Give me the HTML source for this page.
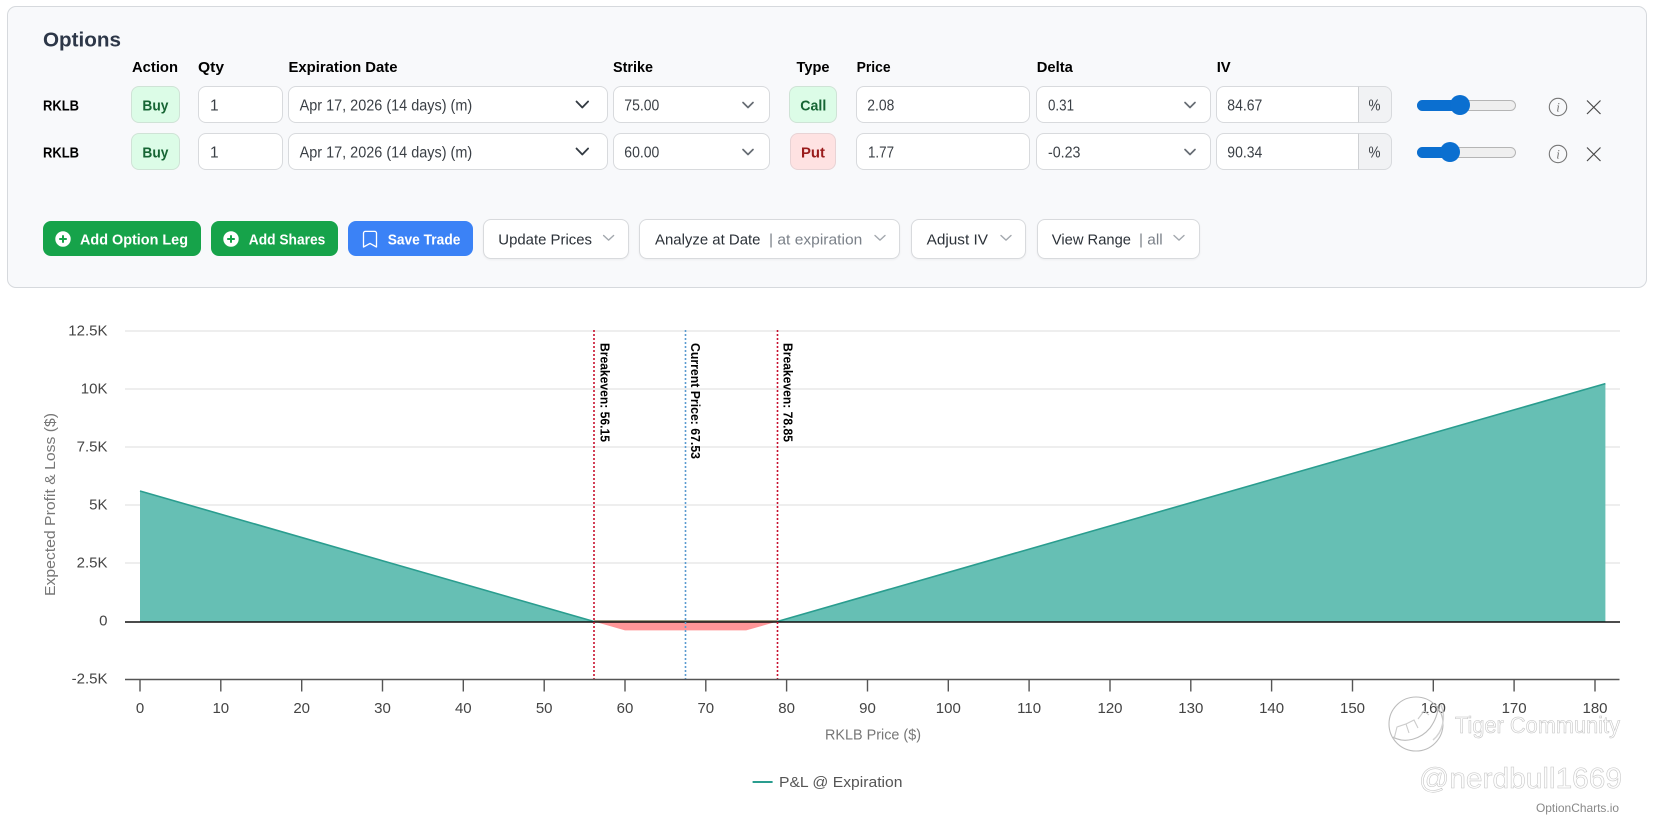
<!DOCTYPE html>
<html lang="en">
<head>
<meta charset="utf-8">
<title>Options</title>
<style>
html,body{margin:0;padding:0;background:#fff;width:1655px;height:816px;overflow:hidden}
body{position:relative;font-family:"Liberation Sans",sans-serif}
.b{position:absolute;box-sizing:border-box}
.panel{left:7px;top:6px;width:1640px;height:282px;background:#f8f9fb;border:1px solid #d6d9dd;border-radius:9px}
.i{background:#fff;border:1px solid #d8dadd;border-radius:8px;height:37px}
.bd{border:1px solid #cfe3d6;border-radius:8px;height:37px;background:#dcfce7}
.rd{border:1px solid #e8d3d5;border-radius:8px;height:37px;background:#fee2e2}
.g{background:#16a34a;border-radius:8px;top:221px;height:35px}
.bl{background:#3b82f6;border-radius:8px;top:221px;height:35px}
.o{background:#fff;border:1px solid #d8dadd;border-radius:8px;top:219px;height:40px;box-shadow:0 1px 2px rgba(0,0,0,.05)}
.add{background:#f1f2f4;border:1px solid #d8dadd;border-left:1px solid #cfd1d4;border-radius:0 8px 8px 0;height:37px}
.tr{background:#efefef;border:1px solid #b5b5b5;border-radius:6px;height:11px}
.fl{background:#0b6fd0;border-radius:6px;height:11px}
.th{background:#0b6fd0;border-radius:50%;width:20px;height:20px}
svg{position:absolute;left:0;top:0}
text{font-family:"Liberation Sans",sans-serif}
.h{font-size:15px;font-weight:700;fill:#000}
.v{font-size:15.5px;fill:#3a3f45}
.w{font-size:14.5px;font-weight:700;fill:#fff}
.n{font-size:15px;fill:#2b3138}
.m{font-size:15px;fill:#7b8189}
.t{font-size:15px;fill:#444}
.q{font-size:13px;font-weight:700;fill:#000}
</style>
</head>
<body>
<div class="b panel"></div>

<div class="b bd" style="left:131px;top:86px;width:49px"></div>
<div class="b i" style="left:198px;top:86px;width:85px"></div>
<div class="b i" style="left:288px;top:86px;width:320px"></div>
<div class="b i" style="left:613px;top:86px;width:157px"></div>
<div class="b bd" style="left:789px;top:86px;width:48px"></div>
<div class="b i" style="left:856px;top:86px;width:174px"></div>
<div class="b i" style="left:1036px;top:86px;width:175px"></div>
<div class="b i" style="left:1216px;top:86px;width:143px;border-radius:8px 0 0 8px"></div>
<div class="b add" style="left:1358px;top:86px;width:34px"></div>
<div class="b tr" style="left:1417px;top:99.5px;width:99px"></div>
<div class="b fl" style="left:1417px;top:99.5px;width:44px"></div>
<div class="b th" style="left:1450px;top:95px"></div>

<div class="b bd" style="left:131px;top:133px;width:49px"></div>
<div class="b i" style="left:198px;top:133px;width:85px"></div>
<div class="b i" style="left:288px;top:133px;width:320px"></div>
<div class="b i" style="left:613px;top:133px;width:157px"></div>
<div class="b rd" style="left:790px;top:133px;width:46px"></div>
<div class="b i" style="left:856px;top:133px;width:174px"></div>
<div class="b i" style="left:1036px;top:133px;width:175px"></div>
<div class="b i" style="left:1216px;top:133px;width:143px;border-radius:8px 0 0 8px"></div>
<div class="b add" style="left:1358px;top:133px;width:34px"></div>
<div class="b tr" style="left:1417px;top:146.5px;width:99px"></div>
<div class="b fl" style="left:1417px;top:146.5px;width:34px"></div>
<div class="b th" style="left:1440px;top:142px"></div>

<div class="b g" style="left:43px;width:158px"></div>
<div class="b g" style="left:211px;width:127px"></div>
<div class="b bl" style="left:348px;width:125px"></div>
<div class="b o" style="left:483px;width:146px"></div>
<div class="b o" style="left:639px;width:261px"></div>
<div class="b o" style="left:911px;width:115px"></div>
<div class="b o" style="left:1037px;width:163px"></div>

<svg width="1655" height="816" viewBox="0 0 1655 816" xmlns="http://www.w3.org/2000/svg">
  <!-- panel text -->
  <text x="43" y="46.5" font-size="20.5" font-weight="700" fill="#2d3748" textLength="78" lengthAdjust="spacingAndGlyphs">Options</text>
  <text class="h" x="132" y="72" textLength="46" lengthAdjust="spacingAndGlyphs">Action</text>
  <text class="h" x="198" y="72" textLength="26" lengthAdjust="spacingAndGlyphs">Qty</text>
  <text class="h" x="288.5" y="72" textLength="109" lengthAdjust="spacingAndGlyphs">Expiration Date</text>
  <text class="h" x="613" y="72" textLength="40" lengthAdjust="spacingAndGlyphs">Strike</text>
  <text class="h" x="796.5" y="72" textLength="33" lengthAdjust="spacingAndGlyphs">Type</text>
  <text class="h" x="856.6" y="72" textLength="34" lengthAdjust="spacingAndGlyphs">Price</text>
  <text class="h" x="1036.8" y="72" textLength="36" lengthAdjust="spacingAndGlyphs">Delta</text>
  <text class="h" x="1216.7" y="72" textLength="14" lengthAdjust="spacingAndGlyphs">IV</text>

  <text class="h" x="43" y="110.5" textLength="36" lengthAdjust="spacingAndGlyphs">RKLB</text>
  <text class="h" x="43" y="157.5" textLength="36" lengthAdjust="spacingAndGlyphs">RKLB</text>
  <text x="142.4" y="110.5" font-size="15" font-weight="700" fill="#166534" textLength="26" lengthAdjust="spacingAndGlyphs">Buy</text>
  <text x="142.4" y="157.5" font-size="15" font-weight="700" fill="#166534" textLength="26" lengthAdjust="spacingAndGlyphs">Buy</text>
  <text x="800.3" y="110.5" font-size="15" font-weight="700" fill="#166534" textLength="26" lengthAdjust="spacingAndGlyphs">Call</text>
  <text x="801" y="157.5" font-size="15" font-weight="700" fill="#991b1b" textLength="24" lengthAdjust="spacingAndGlyphs">Put</text>

  <text class="v" x="210" y="110.5">1</text>
  <text class="v" x="210" y="157.5">1</text>
  <text class="v" x="299.6" y="110.5" textLength="172.6" lengthAdjust="spacingAndGlyphs">Apr 17, 2026 (14 days) (m)</text>
  <text class="v" x="299.6" y="157.5" textLength="172.6" lengthAdjust="spacingAndGlyphs">Apr 17, 2026 (14 days) (m)</text>
  <text class="v" x="624.3" y="110.5" textLength="35" lengthAdjust="spacingAndGlyphs">75.00</text>
  <text class="v" x="624.3" y="157.5" textLength="35" lengthAdjust="spacingAndGlyphs">60.00</text>
  <text class="v" x="867.3" y="110.5" textLength="27" lengthAdjust="spacingAndGlyphs">2.08</text>
  <text class="v" x="868" y="157.5" textLength="26" lengthAdjust="spacingAndGlyphs">1.77</text>
  <text class="v" x="1048" y="110.5" textLength="26" lengthAdjust="spacingAndGlyphs">0.31</text>
  <text class="v" x="1048" y="157.5" textLength="32.5" lengthAdjust="spacingAndGlyphs">-0.23</text>
  <text class="v" x="1227.3" y="110.5" textLength="35" lengthAdjust="spacingAndGlyphs">84.67</text>
  <text class="v" x="1227.3" y="157.5" textLength="35" lengthAdjust="spacingAndGlyphs">90.34</text>
  <text class="v" x="1368.5" y="110.5" textLength="12" lengthAdjust="spacingAndGlyphs">%</text>
  <text class="v" x="1368.5" y="157.5" textLength="12" lengthAdjust="spacingAndGlyphs">%</text>

  <!-- select chevrons -->
  <g fill="none" stroke="#333a42" stroke-width="1.8" stroke-linecap="round" stroke-linejoin="round">
    <path d="M576.5 101.5l5.8 6 5.8-6"/>
    <path d="M576.5 148.5l5.8 6 5.8-6"/>
  </g>
  <g fill="none" stroke="#666c73" stroke-width="1.7" stroke-linecap="round" stroke-linejoin="round">
    <path d="M743 102.5l5 5 5-5"/><path d="M743 149.5l5 5 5-5"/>
    <path d="M1185 102.5l5 5 5-5"/><path d="M1185 149.5l5 5 5-5"/>
  </g>

  <!-- info + close icons -->
  <g fill="none" stroke="#777" stroke-width="1.1">
    <circle cx="1558" cy="107" r="8.7"/><circle cx="1558" cy="154" r="8.7"/>
  </g>
  <g font-style="italic" font-size="13" fill="#777" text-anchor="middle">
    <text x="1558" y="111.5" style="font-family:'Liberation Serif',serif">i</text>
    <text x="1558" y="158.5" style="font-family:'Liberation Serif',serif">i</text>
  </g>
  <g fill="none" stroke="#4a4a4a" stroke-width="1.2">
    <path d="M1587 100.5l13.5 13.5M1600.5 100.5l-13.5 13.5"/>
    <path d="M1587 147.5l13.5 13.5M1600.5 147.5l-13.5 13.5"/>
  </g>

  <!-- button icons -->
  <g>
    <circle cx="63" cy="239" r="7.7" fill="#fff"/>
    <path d="M63 235.2v7.6M59.2 239h7.6" stroke="#16a34a" stroke-width="2"/>
    <circle cx="231" cy="239" r="7.7" fill="#fff"/>
    <path d="M231 235.2v7.6M227.2 239h7.6" stroke="#16a34a" stroke-width="2"/>
    <path d="M363.5 233.2a1.8 1.8 0 0 1 1.8-1.8h9.4a1.8 1.8 0 0 1 1.8 1.8v13.8l-6.5-3.6-6.5 3.6z" fill="none" stroke="#fff" stroke-width="1.3" stroke-linejoin="round"/>
  </g>
  <text class="w" x="80" y="244.5" textLength="108" lengthAdjust="spacingAndGlyphs">Add Option Leg</text>
  <text class="w" x="248.8" y="244.5" textLength="76.5" lengthAdjust="spacingAndGlyphs">Add Shares</text>
  <text class="w" x="387.7" y="244.5" textLength="72.7" lengthAdjust="spacingAndGlyphs">Save Trade</text>
  <text class="n" x="498.3" y="244.5" textLength="93.7" lengthAdjust="spacingAndGlyphs">Update Prices</text>
  <text class="n" x="655" y="244.5" textLength="105.5" lengthAdjust="spacingAndGlyphs">Analyze at Date</text>
  <text class="m" x="769" y="244.5" textLength="93.3" lengthAdjust="spacingAndGlyphs">| at expiration</text>
  <text class="n" x="926.6" y="244.5" textLength="61.4" lengthAdjust="spacingAndGlyphs">Adjust IV</text>
  <text class="n" x="1051.8" y="244.5" textLength="79.2" lengthAdjust="spacingAndGlyphs">View Range</text>
  <text class="m" x="1139" y="244.5" textLength="23.7" lengthAdjust="spacingAndGlyphs">| all</text>
  <g fill="none" stroke="#a3a8ae" stroke-width="1.4" stroke-linecap="round" stroke-linejoin="round">
    <path d="M603.6 235.5l5 4.6 5-4.6"/>
    <path d="M875 235.5l5 4.6 5-4.6"/>
    <path d="M1001 235.5l5 4.6 5-4.6"/>
    <path d="M1174 235.5l5 4.6 5-4.6"/>
  </g>

  <!-- chart grid -->
  <g stroke="#e9e9e9" stroke-width="1.5">
    <path d="M125 331H1620M125 389H1620M125 447H1620M125 505H1620M125 563H1620"/>
  </g>

  <!-- areas -->
  <path d="M140 491L594 621.5L140 621.5Z" fill="#66bfb4"/>
  <path d="M777.3 621.5L1605.4 383.6L1605.4 621.5Z" fill="#66bfb4"/>
  <path d="M594 621.5L625 630.4L746.2 630.4L777.3 621.5Z" fill="#ff9698"/>
  <path d="M140 491L594 621.5M777.3 621.5L1605.4 383.6" fill="none" stroke="#2a9d8f" stroke-width="1.6"/>
  <path d="M594 620.8H777.3" stroke="#9c9c84" stroke-width="1.5"/>
  <path d="M125 622H1620" stroke="#111" stroke-width="1.5"/>

  <!-- reference lines -->
  <g fill="none" stroke-width="1.6" stroke-dasharray="2 2">
    <path d="M594 330V679" stroke="#c8102e"/>
    <path d="M685.5 330V679" stroke="#5b9bd0"/>
    <path d="M777.5 330V679" stroke="#c8102e"/>
  </g>
  <text class="q" transform="translate(600.5,343) rotate(90)" textLength="99" lengthAdjust="spacingAndGlyphs">Breakeven: 56.15</text>
  <text class="q" transform="translate(691,343) rotate(90)" textLength="116" lengthAdjust="spacingAndGlyphs">Current Price: 67.53</text>
  <text class="q" transform="translate(783.5,343) rotate(90)" textLength="99" lengthAdjust="spacingAndGlyphs">Breakeven: 78.85</text>

  <!-- axes -->
  <path d="M125 679.5H1619.5" stroke="#555" stroke-width="1.6"/>
  <path d="M140 680V691.5M220.8 680V691.5M301.7 680V691.5M382.5 680V691.5M463.3 680V691.5M544.2 680V691.5M625 680V691.5M705.8 680V691.5M786.6 680V691.5M867.5 680V691.5M948.3 680V691.5M1029.1 680V691.5M1110 680V691.5M1190.8 680V691.5M1271.6 680V691.5M1352.5 680V691.5M1433.3 680V691.5M1514.1 680V691.5M1595 680V691.5" stroke="#555" stroke-width="1.4"/>
  <g text-anchor="middle">
    <text class="t" x="140" y="713">0</text>
    <text class="t" x="220.8" y="713">10</text>
    <text class="t" x="301.7" y="713">20</text>
    <text class="t" x="382.5" y="713">30</text>
    <text class="t" x="463.3" y="713">40</text>
    <text class="t" x="544.2" y="713">50</text>
    <text class="t" x="625" y="713">60</text>
    <text class="t" x="705.8" y="713">70</text>
    <text class="t" x="786.6" y="713">80</text>
    <text class="t" x="867.5" y="713">90</text>
    <text class="t" x="948.3" y="713">100</text>
    <text class="t" x="1029.1" y="713">110</text>
    <text class="t" x="1110" y="713">120</text>
    <text class="t" x="1190.8" y="713">130</text>
    <text class="t" x="1271.6" y="713">140</text>
    <text class="t" x="1352.5" y="713">150</text>
    <text class="t" x="1433.3" y="713">160</text>
    <text class="t" x="1514.1" y="713">170</text>
    <text class="t" x="1595" y="713">180</text>
  </g>
  <g text-anchor="end">
    <text class="t" x="107.5" y="335.5">12.5K</text>
    <text class="t" x="107.5" y="393.5">10K</text>
    <text class="t" x="107.5" y="451.5">7.5K</text>
    <text class="t" x="107.5" y="509.5">5K</text>
    <text class="t" x="107.5" y="567.5">2.5K</text>
    <text class="t" x="107.5" y="625.5">0</text>
    <text class="t" x="107.5" y="683.5">-2.5K</text>
  </g>
  <text transform="translate(55,596) rotate(-90)" font-size="14.5" fill="#777" textLength="183" lengthAdjust="spacingAndGlyphs">Expected Profit &amp; Loss ($)</text>
  <text x="825" y="739.5" font-size="14.5" fill="#777" textLength="96" lengthAdjust="spacingAndGlyphs">RKLB Price ($)</text>

  <!-- legend -->
  <path d="M752.6 782H772.6" stroke="#2a9d8f" stroke-width="2"/>
  <text x="779" y="787" font-size="14.5" fill="#555" textLength="123.5" lengthAdjust="spacingAndGlyphs">P&amp;L @ Expiration</text>
  <text x="1536" y="812" font-size="12" fill="#888" textLength="83" lengthAdjust="spacingAndGlyphs">OptionCharts.io</text>

  <!-- watermark -->
  <g fill="none" stroke="#bcbcbc" stroke-width="1.1">
    <circle cx="1416" cy="724" r="27"/>
    <path d="M1393 737c12 7 28 2 37-9 5-7 8-15 8-22"/>
    <path d="M1394 739l3-12 9-3 3 9M1406 724l8-4 4 8M1418 719l6-8 5 4" stroke="#cccccc"/>
    <path d="M1441 705c5 12 2 27-8 35" stroke="#d4d4d4" stroke-width="1.5"/>
  </g>
  <text x="1455" y="733" font-size="23" fill="#fdfdfd" stroke="#c2c2c2" stroke-width=".55" textLength="165" lengthAdjust="spacingAndGlyphs">Tiger Community</text>
  <text x="1419" y="788" font-size="29" fill="#fdfdfd" stroke="#c6c6c6" stroke-width=".55" textLength="203" lengthAdjust="spacingAndGlyphs">@nerdbull1669</text>
</svg>
</body>
</html>
